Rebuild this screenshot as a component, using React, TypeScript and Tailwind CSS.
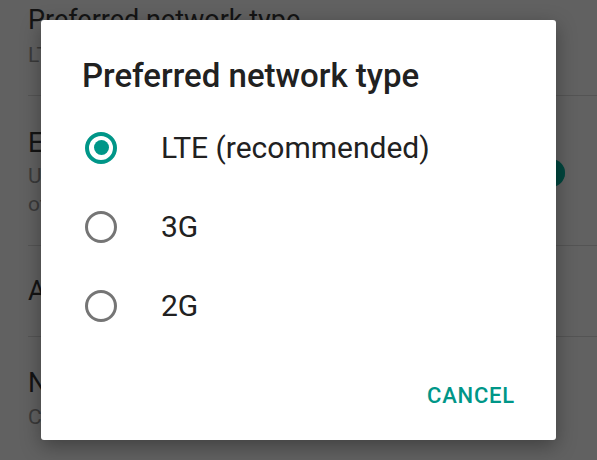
import React from "react"

type Option = { label: string; checked: boolean }

const options: Option[] = [
  { label: "LTE (recommended)", checked: true },
  { label: "3G", checked: false },
  { label: "2G", checked: false },
]

const font = { fontFamily: "Roboto, 'Liberation Sans', sans-serif" }

function Radio({ checked }: { checked: boolean }) {
  if (checked) {
    return (
      <span className="flex h-8 w-8 shrink-0 items-center justify-center rounded-full border-[4px] border-[#009688]">
        <span className="h-[15px] w-[15px] rounded-full bg-[#009688]" />
      </span>
    )
  }
  return <span className="h-8 w-8 shrink-0 rounded-full border-[3px] border-[#757575]" />
}

export default function App() {
  return (
    <div className="relative h-[460px] w-[597px] overflow-hidden bg-[#616161]" style={font}>
      {/* settings list behind the dialog (already dimmed) */}
      <div className="flex flex-col pl-[28px]">
        <div className="pt-[4px] pb-[26px]">
          <div className="text-[27px] leading-[32px] text-[#141414]">Preferred network type</div>
          <div className="mt-[5px] text-[21px] leading-[28px] text-[#3a3a3a]">LTE (recommended)</div>
        </div>

        <div className="flex items-center border-t border-[#545454] pt-[31px] pb-[27px] pr-[32px]">
          <div className="flex-1">
            <div className="text-[27px] leading-[32px] text-[#141414]">Enhanced 4G LTE Mode</div>
            <div className="mt-[3px] text-[21px] leading-[28px] text-[#3a3a3a]">
              Use LTE services to improve voice and
              <br />
              other communications (recommended)
            </div>
          </div>
          <div className="relative flex h-7 w-[54px] items-center">
            <span className="h-[22px] w-full rounded-full bg-[#2f4a46]" />
            <span className="absolute right-0 h-7 w-7 rounded-full bg-[#00463e]" />
          </div>
        </div>

        <div className="border-t border-[#545454] pt-[29px] pb-[29px]">
          <div className="text-[27px] leading-[32px] text-[#141414]">Access Point Names</div>
        </div>

        <div className="border-t border-[#545454] pt-[30px]">
          <div className="text-[27px] leading-[32px] text-[#141414]">Network operators</div>
          <div className="mt-[4px] text-[21px] leading-[28px] text-[#3a3a3a]">Choose a network operator</div>
        </div>
      </div>

      {/* dialog */}
      <div className="absolute left-[41px] top-[20px] flex h-[420px] w-[515px] flex-col rounded-[3px] bg-white pt-[37px] shadow-[0_6px_20px_rgba(0,0,0,0.35)]">
        <h2 className="pl-[41px] text-[33px] font-medium leading-[38px] text-[#212121]">
          Preferred network type
        </h2>

        <div className="mt-[13px] flex flex-col">
          {options.map((opt) => (
            <div key={opt.label} className="flex h-[79px] items-center pl-[44px]">
              <Radio checked={opt.checked} />
              <span className="ml-[44px] text-[30px] leading-[36px] text-[#212121]">{opt.label}</span>
            </div>
          ))}
        </div>

        <div className="mt-auto flex justify-end pb-[31px] pr-[41px]">
          <button className="text-[22px] font-medium uppercase leading-[26px] tracking-[0.8px] text-[#009688]">
            Cancel
          </button>
        </div>
      </div>
    </div>
  )
}
